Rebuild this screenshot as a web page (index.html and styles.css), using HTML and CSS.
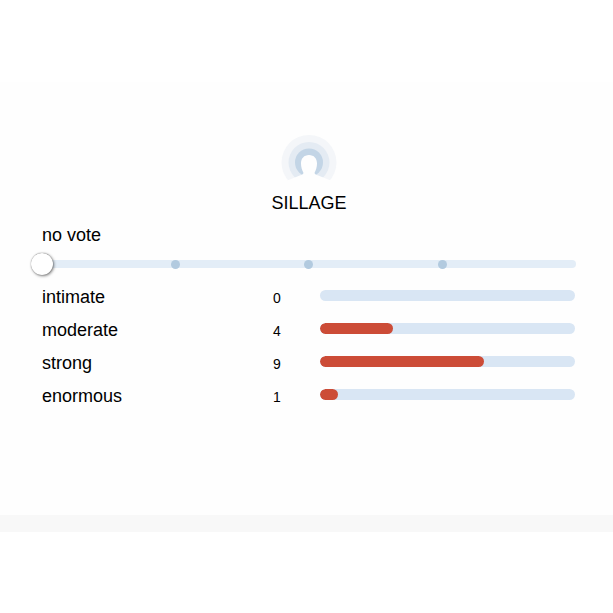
FILE: index.html
```html
<!DOCTYPE html>
<html lang="en">
<head>
  <meta charset="UTF-8" />
  <meta name="viewport" content="width=device-width, initial-scale=1.0" />
  <title>Sillage</title>
  <link rel="stylesheet" href="styles.css">
</head>
<body>
  <div class="panel">
    <div class="header">
      <svg class="icon" width="56" height="50" viewBox="0 0 56 50">
        <circle cx="28" cy="27.500" r="27.500" fill="#f4f6f9" />
        <circle cx="28" cy="27.500" r="20.500" fill="#e4ebf3" />
        <circle cx="28" cy="27.500" r="14" fill="#c3d5e6" />
        <path d="M28 20C33 20 36 23.500 36 28.500C36 32 35 35 33.500 38C34 39.500 35.500 40 38.500 41L56 48V50H0V48L17.500 41C20.500 40 22 39.500 22.500 38C21 35 20 32 20 28.500C20 23.500 23 20 28 20Z" fill="#fefefe" />
      </svg>
      <h1>SILLAGE</h1>
    </div>

    <div class="vote-label">no vote</div>
    <div class="slider">
      <div class="step"><span class="dot"></span></div>
      <div class="step"><span class="dot"></span></div>
      <div class="step"><span class="dot"></span></div>
      <div class="step"></div>
      <span class="thumb"></span>
    </div>

    <div class="rows">
      <div class="row">
        <span class="name">intimate</span>
        <span class="count">0</span>
        <div class="bar"></div>
      </div>
      <div class="row">
        <span class="name">moderate</span>
        <span class="count">4</span>
        <div class="bar"><div class="fill" style="width: 73px"></div></div>
      </div>
      <div class="row">
        <span class="name">strong</span>
        <span class="count">9</span>
        <div class="bar"><div class="fill" style="width: 164px"></div></div>
      </div>
      <div class="row">
        <span class="name">enormous</span>
        <span class="count">1</span>
        <div class="bar"><div class="fill" style="width: 18px"></div></div>
      </div>
    </div>
  </div>
  <div class="band"></div>
</body>
</html>
```

FILE: styles.css
```css
html, body {
  margin: 0;
  padding: 0;
  background: #fff;
  font-family: "Liberation Sans", Arial, sans-serif;
  color: #000;
  overflow: hidden;
  height: 100%;
}

.panel {
  box-sizing: border-box;
  margin-top: 82px;
  height: 433px;
  padding: 53px 37px 0 42px;
  background: #fefefe;
}

.band {
  height: 17px;
  background: #f8f8f8;
}

.header {
  display: flex;
  flex-direction: column;
  align-items: center;
}

.icon {
  display: block;
  width: 56px;
  height: 50px;
}

h1 {
  margin: 7px 0 0;
  font-size: 18px;
  line-height: 22px;
  font-weight: normal;
}

.vote-label {
  margin-top: 10px;
  font-size: 18px;
  line-height: 22px;
}

.slider {
  position: relative;
  display: flex;
  width: 534px;
  height: 8px;
  margin-top: 14px;
  background: #e3edf7;
  border-radius: 4px;
}

.step {
  flex: 1;
  display: flex;
  justify-content: flex-end;
  align-items: center;
}

.dot {
  width: 9px;
  height: 9px;
  margin-right: -4px;
  border-radius: 50%;
  background: #b2cadf;
}

.thumb {
  position: absolute;
  left: -11px;
  top: -7px;
  width: 22px;
  height: 22px;
  border-radius: 50%;
  background: #fff;
  box-shadow: 0 0 1px rgba(0, 0, 0, 0.5), 1px 1px 3px rgba(0, 0, 0, 0.5);
}

.rows {
  display: flex;
  flex-direction: column;
  gap: 11px;
  margin-top: 18px;
}

.row {
  display: flex;
  align-items: flex-start;
  height: 22px;
}

.name {
  width: 231px;
  font-size: 18px;
  line-height: 22px;
}

.count {
  width: 47px;
  font-size: 14px;
  line-height: 22px;
  margin-top: 1px;
}

.bar {
  width: 255px;
  height: 11px;
  margin-top: 4px;
  background: #d9e6f4;
  border-radius: 6px;
  overflow: hidden;
}

.fill {
  height: 100%;
  background: #cc4c37;
  border-radius: 6px;
}
```
